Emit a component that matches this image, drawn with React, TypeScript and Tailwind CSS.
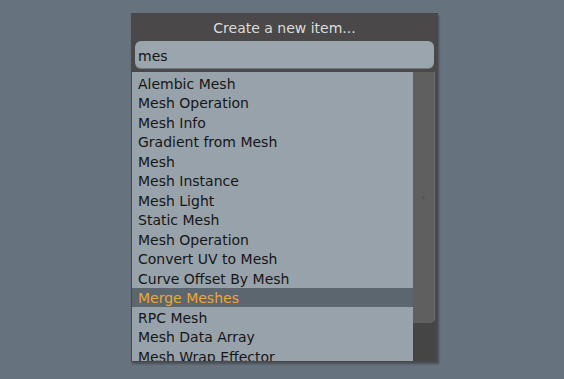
const items = [
  "Alembic Mesh",
  "Mesh Operation",
  "Mesh Info",
  "Gradient from Mesh",
  "Mesh",
  "Mesh Instance",
  "Mesh Light",
  "Static Mesh",
  "Mesh Operation",
  "Convert UV to Mesh",
  "Curve Offset By Mesh",
  "Merge Meshes",
  "RPC Mesh",
  "Mesh Data Array",
  "Mesh Wrap Effector",
];

const selected = 11;

export default function App() {
  return (
    <div className="w-[564px] h-[379px] bg-[#66727d] pt-[13px] pl-[131px] overflow-hidden" style={{ fontFamily: "'DejaVu Sans', sans-serif" }}>
      <div className="w-[307px] h-[349px] bg-[#4a4848] flex flex-col shadow-[1px_2px_2px_rgba(0,0,0,0.3)]">
        {/* Title */}
        <div className="h-[28px] pt-[3px] flex items-center justify-center text-[#dcdcdc] text-[14px]">
          Create a new item...
        </div>

        {/* Search */}
        <div className="px-[4px]">
          <div className="h-[28px] pt-[3px] rounded-[6px] bg-[#9ba5ad] flex items-center px-[3px] text-[14px] text-[#141414] shadow-[inset_0_-1px_0_rgba(0,0,0,0.25)]">
            mes
          </div>
        </div>

        {/* List + scrollbar */}
        <div className="flex mt-[3px] ml-[1px] h-[289px]">
          <div className="w-[281px] bg-[#98a2aa] overflow-hidden pt-[1px]">
            {items.map((item, i) => (
              <div
                key={i}
                className={
                  i === selected
                    ? "h-[19.5px] pt-[3px] flex items-center pl-[6px] text-[14px] bg-[#5c666e] text-[#e9a83c]"
                    : "h-[19.5px] pt-[3px] flex items-center pl-[6px] text-[14px] text-[#161616]"
                }
              >
                {item}
              </div>
            ))}
          </div>
          <div className="w-[22px] bg-[#454545] flex flex-col">
            <div className="h-[251px] bg-[#5f5f5f] rounded-br-[5px] border-r border-[#6a6a6a] flex items-center justify-center">
              <span className="text-[10px] text-[#4d4d4d] leading-none">‹</span>
            </div>
          </div>
        </div>
      </div>
    </div>
  );
}
